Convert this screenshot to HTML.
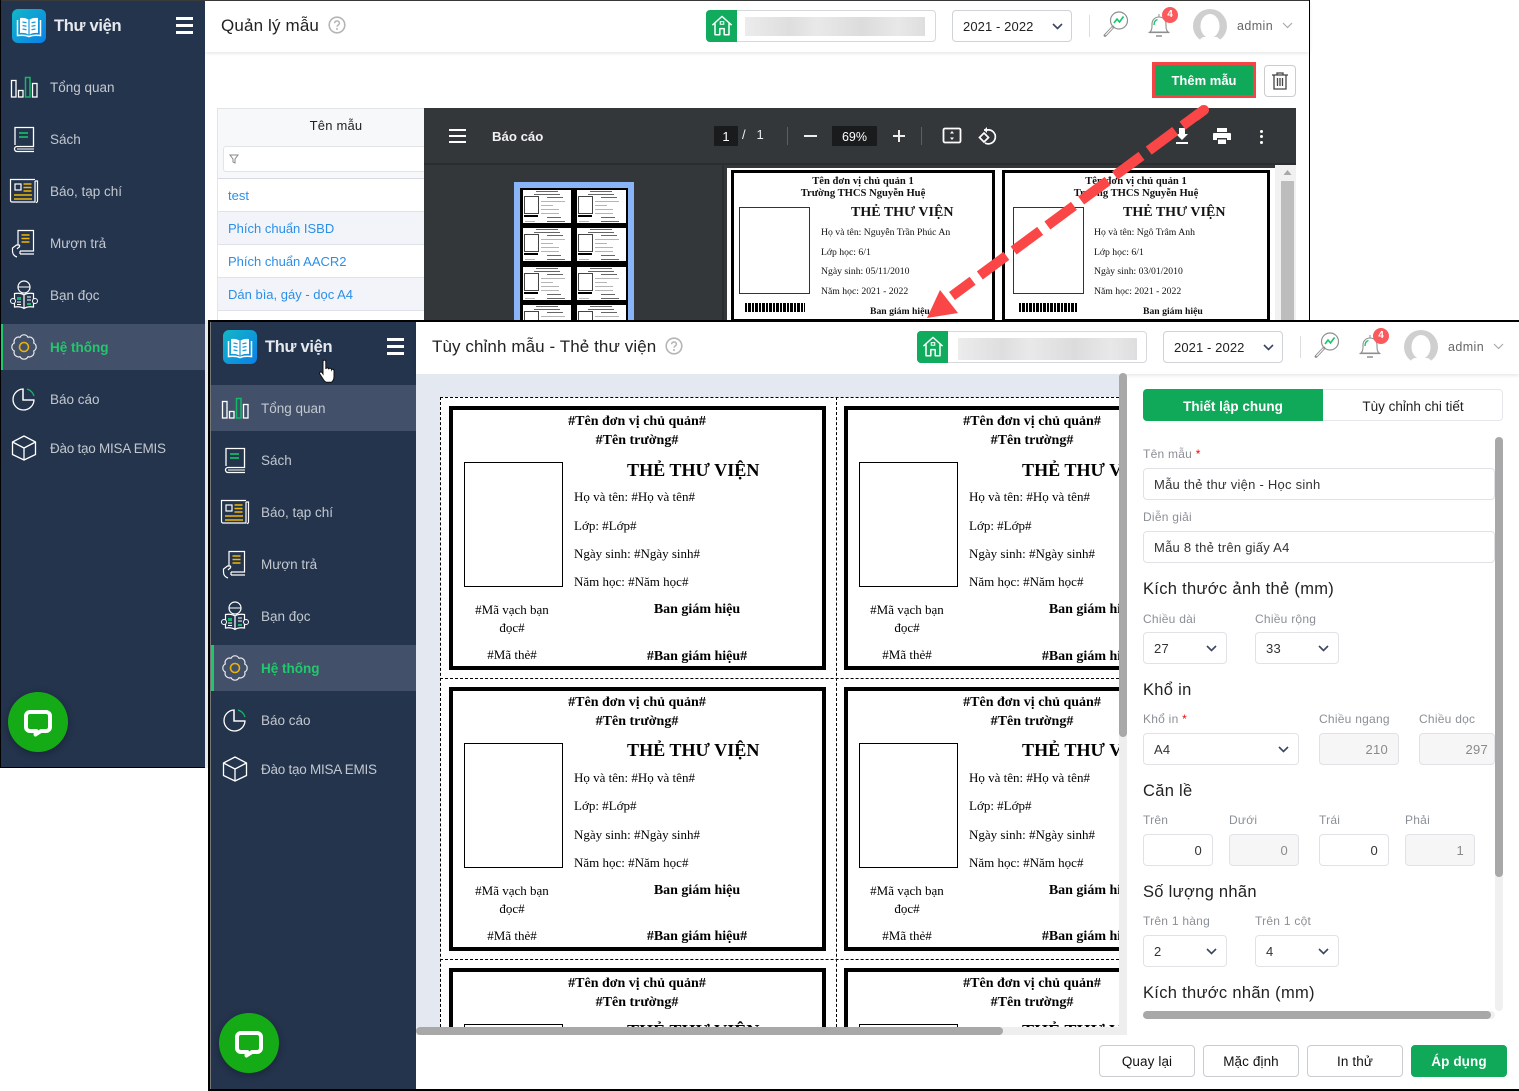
<!DOCTYPE html>
<html lang="vi"><head><meta charset="utf-8"><title>Thư viện</title>
<style>
html,body{margin:0;padding:0;background:#fff;overflow:hidden}
#p{position:relative;width:1519px;height:1091px;overflow:hidden;background:#fff;font-family:"Liberation Sans","Noto Sans CJK SC",sans-serif;color:#222}
#p div,#p svg{position:absolute;box-sizing:border-box}
.t{white-space:nowrap;line-height:24px;height:24px}
.side{width:205px;height:767px;background:#24344d;overflow:hidden}
.it{left:0;width:205px;height:46px}
.it svg{left:8px;top:7px;width:32px;height:32px}
.it .n{left:50px;top:0;line-height:48px;font-size:13.5px;color:#c3c8cf;white-space:nowrap}
.act{background:#42506a;border-left:3px solid #1fc96b}
.act svg{left:5px}.act .n{left:47px;color:#21c96c;font-weight:bold}
.hd{font-size:16.5px;color:#222;white-space:nowrap;line-height:26px;height:26px;letter-spacing:.3px}
.l{font-size:12px;color:#8b8f96;white-space:nowrap;line-height:22px;height:22px;letter-spacing:.25px}
.f{border:1px solid #e0e2e6;border-radius:4px;background:#fff;font-size:13px;color:#333;line-height:32px;padding:0 10px;white-space:nowrap;overflow:hidden;letter-spacing:.25px}
.r{text-align:right}.dis{background:#f6f6f6;color:#8a8a8a}
.chev{width:11px;height:7px}
.b{border:1px solid #c9ccd1;border-radius:4px;background:#fff;font-size:13.5px;color:#111;text-align:center;line-height:32px;letter-spacing:.1px}
.link{font-size:13px;color:#2b8fe8;white-space:nowrap;line-height:24px;height:24px}
.card{width:377px;height:264px;background:#fff;box-shadow:inset 0 0 0 4px #000;font-family:"Liberation Serif","Noto Serif CJK SC",serif;color:#000}
.card .x{white-space:nowrap;line-height:20px;height:20px;font-size:13px}
.c{text-align:center}.bd{font-weight:bold}
.card .tt{font-size:14px;line-height:22px;height:22px}
.card .th{font-size:18.1px;left:178px}
.m{width:270px;height:160px;background:#fff;font-family:"Liberation Serif","Noto Serif CJK SC",serif;color:#111;box-shadow:inset 0 0 0 3px #000}
.m .x{white-space:nowrap;line-height:20px;height:20px;font-size:9.7px}
.m .tt{font-size:10.6px}
.mini{background:#fff;box-shadow:inset 0 0 0 2px #000;overflow:hidden}
.mini .ph{left:3px;top:8px;width:15px;height:18px;border:1.5px solid #444}
.mini .bc{left:3px;top:27px;width:14px;height:2px;background:#000}
.mini .ln{height:1px;background:#b5b5b5}
.mini .dk{height:1px;background:#666}
</style></head><body><div id="p">
<svg width="0" height="0" style="left:0;top:0"><defs>
<symbol id="i1" viewBox="0 0 32 32"><g fill="none" stroke="#fff" stroke-width="1.3"><rect x="3.5" y="9.5" width="4.5" height="16.5"/><rect x="10.5" y="19.5" width="4.5" height="6.5"/><rect x="24.5" y="12.5" width="4.5" height="13.5"/></g><rect x="17.5" y="6.5" width="4.5" height="19.5" fill="none" stroke="#14b866" stroke-width="1.5"/></symbol>
<symbol id="i2" viewBox="0 0 32 32"><path d="M7 22V4.500h18.500v19H9a2.500 2.500 0 0 0 0 5h17" fill="none" stroke="#fff" stroke-width="1.300"/><path d="M9 26h17" stroke="#fff"/><path d="M11 10h9M11 14h9" stroke="#14b866" stroke-width="1.800"/></symbol>
<symbol id="i3" viewBox="0 0 32 32"><path d="M27 6v21H4a1.500 1.500 0 0 1-1.500-1.500V4.500h24.500M27 6h2.500v20a1.500 1.500 0 0 1-1.500 1.500" fill="none" stroke="#fff" stroke-width="1.200"/><rect x="7" y="9" width="6" height="6" fill="none" stroke="#fff" stroke-width="1.200"/><path d="M15.500 9h8M15.500 12.500h8M15.500 16h8M6 20h18M6 24h18" stroke="#f2b705" stroke-width="1.500"/></symbol>
<symbol id="i4" viewBox="0 0 32 32"><path d="M10 18V3.500h15.500V24H12M12 27h14M12 24v3" fill="none" stroke="#fff" stroke-width="1.200"/><path d="M13.500 8h8M13.500 11.500h8M13.500 15h8" stroke="#f2b705" stroke-width="1.500"/><path d="M9 30c-3-1-4.500-3-4.500-6v-3l4-3h2.500c1 0 1 2-.5 2.500L9 22" fill="#24344d" stroke="#fff" stroke-width="1.200"/></symbol>
<symbol id="i5" viewBox="0 0 32 32"><circle cx="16" cy="8" r="6" fill="none" stroke="#fff" stroke-width="1.200"/><path d="M10 8h12" stroke="#fff"/><path d="M16 16c-3-2-6-2-9.500-1.500V28c3.500-.5 6.500-.5 9.500 1.500 3-2 6-2 9.500-1.500V14.500C22 14 19 14 16 16zM16 16v13.500" fill="#24344d" stroke="#fff" stroke-width="1.200"/><path d="M9 18h4v3H9zM19 24h4v2h-4z" fill="#14b866"/><path d="M9 23h4M9 25.500h4M19 18h4M19 21h4" stroke="#fff"/><circle cx="5" cy="22" r="2.500" fill="#24344d" stroke="#fff"/><circle cx="27" cy="22" r="2.500" fill="#24344d" stroke="#fff"/></symbol>
<symbol id="i6" viewBox="0 0 32 32"><path d="M25.700 11.980A4.500 4.500 0 0 1 25.700 20.020A4.500 4.500 0 0 1 20.020 25.700A4.500 4.500 0 0 1 11.980 25.700A4.500 4.500 0 0 1 6.300 20.020A4.500 4.500 0 0 1 6.300 11.980A4.500 4.500 0 0 1 11.980 6.300A4.500 4.500 0 0 1 20.020 6.300A4.500 4.500 0 0 1 25.700 11.980Z" fill="none" stroke="#e8e8e8" stroke-width="1.200"/><circle cx="16" cy="16" r="4.500" fill="none" stroke="#e9b20c" stroke-width="1.600"/></symbol>
<symbol id="i7" viewBox="0 0 32 32"><path d="M15 6a10.500 10.500 0 1 0 11 11H15z" fill="none" stroke="#fff" stroke-width="1.300"/><path d="M15 5.500V17h11" fill="none" stroke="#fff" stroke-width="1.300"/><path d="M19 6a10.500 10.500 0 0 1 7 7" fill="none" stroke="#14b866" stroke-width="1.300"/></symbol>
<symbol id="i8" viewBox="0 0 32 32"><path d="M16 4l11.500 6v12.500L16 28 4.500 22.500V10zM4.500 10L16 16l11.500-6M16 16v12" fill="none" stroke="#fff" stroke-width="1.300" stroke-linejoin="round"/></symbol>
<symbol id="logo" viewBox="0 0 34 34"><path d="M17 11c-2.500-2-5.500-2.500-9-2v15c3.500-.5 6.500 0 9 2 2.500-2 5.500-2.500 9-2V9c-3.500-.5-6.500 0-9 2z" fill="#fff"/><path d="M17 11v15" stroke="#1a9ad8" stroke-width="1.200"/><path d="M5.500 11v15.500c4-.5 8-.5 11.500 1 3.500-1.500 7.500-1.500 11.500-1V11" fill="none" stroke="#fff" stroke-width="1.500"/><path d="M10.500 13l4 .8M10.500 16.500l4 .8M10.500 20l4 .8M23.500 13l-4 .8M23.500 16.500l-4 .8M23.500 20l-4 .8" stroke="#1a9ad8" stroke-width="1.300"/></symbol>
<symbol id="chat" viewBox="0 0 60 60"><path d="M22 20h16a4 4 0 0 1 4 4v11a4 4 0 0 1-4 4h-5l-5.500 3.500.7-3.500H22a4 4 0 0 1-4-4V24a4 4 0 0 1 4-4z" fill="none" stroke="#fff" stroke-width="4" stroke-linejoin="round"/></symbol>
<symbol id="home" viewBox="0 0 32 32"><path d="M5 15L16 5l11 10M8 13v13h5.500v-7h5v7H24V13" fill="none" stroke="#fff" stroke-width="1.700" stroke-linejoin="round"/><rect x="14" y="11" width="4" height="3" fill="none" stroke="#fff" stroke-width="1.200"/></symbol>
<symbol id="chv" viewBox="0 0 11 7"><path d="M1 1l4.500 4.500L10 1" fill="none" stroke="#3c4560" stroke-width="1.600"/></symbol>
<symbol id="srch" viewBox="0 0 28 28"><circle cx="17" cy="10.500" r="8.500" fill="#fff" stroke="#8f8f8f" stroke-width="1.200"/><path d="M11 17L3 25.500" stroke="#8f8f8f" stroke-width="2.800" stroke-linecap="round"/><path d="M3.500 25L10.500 17.500" stroke="#fff" stroke-width="1"/><path d="M12 13l3-4 2.500 3 4-5.500" fill="none" stroke="#14c56a" stroke-width="1.600"/></symbol>
<symbol id="bell" viewBox="0 0 28 28"><path d="M5 21c2-2 2-4 2-8 0-4 3-7 7-7s7 3 7 7c0 4 0 6 2 8z" fill="#fff" stroke="#8f8f8f" stroke-width="1.100"/><path d="M3.500 21.500h21" stroke="#8f8f8f" stroke-width="1.200"/><path d="M11 25h6" stroke="#8f8f8f" stroke-width="1.500"/><path d="M14 3v3" stroke="#8f8f8f"/><path d="M9 14c0-3 1.500-5 3.500-5.500" fill="none" stroke="#14c56a" stroke-width="1.400"/></symbol>
<symbol id="ava" viewBox="0 0 34 34"><circle cx="17" cy="17" r="17" fill="#cfcfcf"/><ellipse cx="17" cy="17" rx="9.500" ry="12" fill="#fff"/><path d="M5 34c2-5 5-6 6-6h12c1 0 4 1 6 6z" fill="#fff"/></symbol>
<symbol id="q" viewBox="0 0 18 18"><circle cx="9" cy="9" r="7.800" fill="none" stroke="#b5b5b5" stroke-width="1.600"/><path d="M6.600 7.200c0-3 4.800-3 4.800 0 0 1.800-2.400 1.800-2.400 3.600" fill="none" stroke="#b5b5b5" stroke-width="1.500"/><circle cx="9" cy="13" r="1" fill="#b5b5b5"/></symbol>
</defs></svg>

<!-- WINDOW 1 -->
<div style="left:0;top:0;width:1310px;height:1px;background:#3a3a3a"></div>
<div style="left:1309px;top:0;width:1px;height:322px;background:#000"></div>
<div style="left:205px;top:1px;width:1104px;height:51px;background:#fff;box-shadow:0 1px 4px rgba(0,0,0,.12)"></div>

<div class="side" style="left:1px;top:1px;width:204px;height:766px">
 <div style="left:-1px;top:-1px;width:205px;height:767px">
  <svg style="left:12px;top:9px;width:34px;height:34px;border-radius:6px;background:linear-gradient(135deg,#13b7c6,#0a80e8)"><use href="#logo"/></svg>
  <div style="left:54px;top:14px;font-size:16.5px;font-weight:bold;color:#e6e9ee;white-space:nowrap;line-height:24px;letter-spacing:-.3px">Thư viện</div>
  <div style="left:176px;top:17px;width:17px;height:3px;background:#fff"></div><div style="left:176px;top:24px;width:17px;height:3px;background:#fff"></div><div style="left:176px;top:31px;width:17px;height:3px;background:#fff"></div>
  <div class="it" style="top:64px"><svg><use href="#i1"/></svg><div class="n">Tổng quan</div></div>
  <div class="it" style="top:116px"><svg><use href="#i2"/></svg><div class="n">Sách</div></div>
  <div class="it" style="top:168px"><svg><use href="#i3"/></svg><div class="n">Báo, tạp chí</div></div>
  <div class="it" style="top:220px"><svg><use href="#i4"/></svg><div class="n">Mượn trả</div></div>
  <div class="it" style="top:272px"><svg><use href="#i5"/></svg><div class="n">Bạn đọc</div></div>
  <div class="it act" style="top:324px"><svg><use href="#i6"/></svg><div class="n">Hệ thống</div></div>
  <div class="it" style="top:376px"><svg><use href="#i7"/></svg><div class="n">Báo cáo</div></div>
  <div class="it" style="top:425px"><svg><use href="#i8"/></svg><div class="n" style="letter-spacing:-.25px">Đào tạo MISA EMIS</div></div>
  <svg style="left:8px;top:692px;width:60px;height:60px;border-radius:50%;background:#15ab17;box-shadow:0 2px 8px rgba(0,0,0,.3)"><use href="#chat"/></svg>
 </div>
</div>
<div style="left:0;top:0;width:1px;height:768px;background:#000"></div>
<div style="left:0;top:767px;width:209px;height:1px;background:#000"></div>
<div style="left:205px;top:320px;width:3px;height:448px;background:#e8e8e8"></div>

<div class="t" style="left:221px;top:14px;font-size:17px;color:#222;letter-spacing:.15px">Quản lý mẫu</div>
<svg style="left:328px;top:16px;width:18px;height:18px"><use href="#q"/></svg>
<div style="left:706px;top:10px;width:230px;height:32px;border:1px solid #d6d8dc;border-radius:4px;background:#fff"></div>
<div style="left:706px;top:10px;width:31px;height:32px;background:#10ab5d;border-radius:4px 0 0 4px"></div>
<svg style="left:708px;top:12px;width:28px;height:28px"><use href="#home"/></svg>
<div style="left:745px;top:17px;width:180px;height:19px;background:linear-gradient(90deg,#ececec,#dedede 25%,#e9e9e9 40%,#dcdcdc 65%,#e8e8e8 85%,#dedede)"></div>
<div class="f" style="left:952px;top:10px;width:120px;height:32px;border-color:#cfd2d6;color:#222;letter-spacing:.1px">2021 - 2022</div>
<svg class="chev" style="left:1052px;top:23px"><use href="#chv"/></svg>
<div style="left:1089px;top:15px;width:1px;height:22px;background:#ddd"></div>
<svg style="left:1102px;top:10px;width:28px;height:28px"><use href="#srch"/></svg>
<svg style="left:1145px;top:11px;width:28px;height:28px"><use href="#bell"/></svg>
<div style="left:1162px;top:7px;width:16px;height:16px;border-radius:50%;background:#fb5a5c;color:#fff;font-size:10px;font-weight:bold;text-align:center;line-height:16px">4</div>
<svg style="left:1193px;top:9px;width:34px;height:34px"><use href="#ava"/></svg>
<div class="t" style="left:1237px;top:14px;font-size:12.5px;color:#666;letter-spacing:.4px">admin</div>
<svg class="chev" style="left:1282px;top:22px"><path d="M1 1l4.500 4.500L10 1" fill="none" stroke="#aaa" stroke-width="1.200"/></svg>

<div style="left:1152px;top:62px;width:104px;height:36px;background:#10a95a;border:3px solid #f44446;color:#fff;font-weight:bold;font-size:13px;text-align:center;line-height:32px">Thêm mẫu</div>
<div style="left:1264px;top:65px;width:32px;height:32px;border:1px solid #ccc;border-radius:4px"></div>
<svg style="left:1270px;top:71px;width:20px;height:20px"><path d="M2 4h16M7 4V2h6v2M4 4v14h12V4M7.500 7v8M10 7v8M12.500 7v8" fill="none" stroke="#444" stroke-width="1.300"/></svg>

<!-- table -->
<div style="left:217px;top:108px;width:207px;height:212px;border-left:1px solid #e2e4e8;border-top:1px solid #e2e4e8;background:#fff"></div>
<div style="left:218px;top:109px;width:206px;height:69px;background:#f7f8fa"></div>
<div class="t" style="left:218px;top:114px;width:236px;text-align:center;font-size:13px;color:#222;letter-spacing:.2px">Tên mẫu</div>
<div style="left:223px;top:146px;width:201px;height:26px;background:#fff;border:1px solid #e2e4e8;border-radius:3px 0 0 3px;border-right:0"></div>
<svg style="left:229px;top:154px;width:10px;height:10px"><path d="M1 1h8L6 5v4L4 8V5z" fill="none" stroke="#888"/></svg>
<div style="left:218px;top:178px;width:206px;height:1px;background:#d7dae0"></div>
<div style="left:218px;top:211px;width:206px;height:34px;background:#f2f4f9;border-top:1px solid #dfe2ea;border-bottom:1px solid #dfe2ea"></div>
<div style="left:218px;top:277px;width:206px;height:34px;background:#f2f4f9;border-top:1px solid #dfe2ea;border-bottom:1px solid #dfe2ea"></div>
<div class="link" style="left:228px;top:184px">test</div>
<div class="link" style="left:228px;top:217px">Phích chuẩn ISBD</div>
<div class="link" style="left:228px;top:250px">Phích chuẩn AACR2</div>
<div class="link" style="left:228px;top:283px">Dán bìa, gáy - dọc A4</div>

<!-- pdf viewer -->
<div style="left:424px;top:108px;width:872px;height:214px;background:#33373a;overflow:hidden">
 <div style="left:0;top:55px;width:872px;height:2px;background:#2b2e31"></div>
 <div style="left:25px;top:21px;width:17px;height:2px;background:#fff"></div><div style="left:25px;top:27px;width:17px;height:2px;background:#fff"></div><div style="left:25px;top:33px;width:17px;height:2px;background:#fff"></div>
 <div class="t" style="left:68px;top:17px;font-size:13.2px;font-weight:bold;color:#f1f1f1">Báo cáo</div>
 <div style="left:290px;top:18px;width:24px;height:20px;background:#191b1c;color:#fff;font-size:13px;text-align:center;line-height:22px">1</div>
 <div class="t" style="left:318px;top:15px;font-size:13px;color:#eee">/&nbsp;&nbsp;&nbsp;1</div>
 <div style="left:363px;top:19px;width:1px;height:18px;background:#5c6064"></div>
 <div style="left:380px;top:27px;width:13px;height:2px;background:#eee"></div>
 <div style="left:408px;top:18px;width:45px;height:20px;background:#191b1c;color:#fff;font-size:12.5px;text-align:center;line-height:22px">69%</div>
 <div style="left:469px;top:27px;width:12px;height:2px;background:#eee"></div><div style="left:474px;top:22px;width:2px;height:12px;background:#eee"></div>
 <div style="left:497px;top:19px;width:1px;height:18px;background:#5c6064"></div>
 <svg style="left:518px;top:19px;width:20px;height:18px"><rect x="1.500" y="1.500" width="17" height="14" rx="1.500" fill="none" stroke="#fff" stroke-width="1.800"/><path d="M10 4l2 2.500H8zM10 13l2-2.500H8z" fill="#fff"/></svg>
 <svg style="left:553px;top:18px;width:20px;height:20px"><path d="M7 4h3a7 7 0 1 1-2 13" fill="none" stroke="#fff" stroke-width="1.700"/><path d="M10 1v6l-3-3z" fill="#fff"/><path d="M7 7l4.500 4.500L7 16l-4.500-4.500z" fill="none" stroke="#fff" stroke-width="1.700"/></svg>
 <svg style="left:750px;top:19px;width:16px;height:18px"><path d="M5 1h6v6h3l-6 6-6-6h3zM2 15h12v2H2z" fill="#fff"/></svg>
 <svg style="left:788px;top:19px;width:20px;height:18px"><path d="M5 1h10v4H5zM2 6h16a1 1 0 0 1 1 1v6h-4v-2H5v2H1V7a1 1 0 0 1 1-1zM6 12.500h8V17H6z" fill="#fff"/></svg>
 <div style="left:836px;top:22px;width:3px;height:3px;border-radius:50%;background:#fff"></div><div style="left:836px;top:27px;width:3px;height:3px;border-radius:50%;background:#fff"></div><div style="left:836px;top:33px;width:3px;height:3px;border-radius:50%;background:#fff"></div>
 <div style="left:298px;top:57px;width:2px;height:157px;background:#2b2e31"></div>
 <!-- thumb -->
 <div style="left:90px;top:74px;width:120px;height:140px;background:#8ab4f8;overflow:hidden">
  <div style="left:6px;top:6px;width:108px;height:134px;background:#000"></div>
  <div class="mini" style="left:7px;top:6px;width:52px;height:37px"><div class="dk" style="left:15px;top:3px;width:22px"></div><div class="dk" style="left:13px;top:6px;width:26px"></div><div class="ph"></div><div class="bc"></div><div class="dk" style="left:26px;top:9px;width:16px"></div><div class="ln" style="left:20px;top:13px;width:24px"></div><div class="ln" style="left:20px;top:17px;width:12px"></div><div class="ln" style="left:20px;top:21px;width:18px"></div><div class="ln" style="left:20px;top:25px;width:18px"></div><div class="dk" style="left:26px;top:29px;width:14px"></div><div class="ln" style="left:4px;top:33px;width:10px"></div><div class="dk" style="left:26px;top:33px;width:18px"></div></div>
  <div class="mini" style="left:61px;top:6px;width:53px;height:37px"><div class="dk" style="left:15px;top:3px;width:22px"></div><div class="dk" style="left:13px;top:6px;width:26px"></div><div class="ph"></div><div class="bc"></div><div class="dk" style="left:26px;top:9px;width:16px"></div><div class="ln" style="left:20px;top:13px;width:24px"></div><div class="ln" style="left:20px;top:17px;width:12px"></div><div class="ln" style="left:20px;top:21px;width:18px"></div><div class="ln" style="left:20px;top:25px;width:18px"></div><div class="dk" style="left:26px;top:29px;width:14px"></div><div class="ln" style="left:4px;top:33px;width:10px"></div><div class="dk" style="left:26px;top:33px;width:18px"></div></div>
  <div class="mini" style="left:7px;top:44px;width:52px;height:37px"><div class="dk" style="left:15px;top:3px;width:22px"></div><div class="dk" style="left:13px;top:6px;width:26px"></div><div class="ph"></div><div class="bc"></div><div class="dk" style="left:26px;top:9px;width:16px"></div><div class="ln" style="left:20px;top:13px;width:24px"></div><div class="ln" style="left:20px;top:17px;width:12px"></div><div class="ln" style="left:20px;top:21px;width:18px"></div><div class="ln" style="left:20px;top:25px;width:18px"></div><div class="dk" style="left:26px;top:29px;width:14px"></div><div class="ln" style="left:4px;top:33px;width:10px"></div><div class="dk" style="left:26px;top:33px;width:18px"></div></div>
  <div class="mini" style="left:61px;top:44px;width:53px;height:37px"><div class="dk" style="left:15px;top:3px;width:22px"></div><div class="dk" style="left:13px;top:6px;width:26px"></div><div class="ph"></div><div class="bc"></div><div class="dk" style="left:26px;top:9px;width:16px"></div><div class="ln" style="left:20px;top:13px;width:24px"></div><div class="ln" style="left:20px;top:17px;width:12px"></div><div class="ln" style="left:20px;top:21px;width:18px"></div><div class="ln" style="left:20px;top:25px;width:18px"></div><div class="dk" style="left:26px;top:29px;width:14px"></div><div class="ln" style="left:4px;top:33px;width:10px"></div><div class="dk" style="left:26px;top:33px;width:18px"></div></div>
  <div class="mini" style="left:7px;top:83px;width:52px;height:37px"><div class="dk" style="left:15px;top:3px;width:22px"></div><div class="dk" style="left:13px;top:6px;width:26px"></div><div class="ph"></div><div class="bc"></div><div class="dk" style="left:26px;top:9px;width:16px"></div><div class="ln" style="left:20px;top:13px;width:24px"></div><div class="ln" style="left:20px;top:17px;width:12px"></div><div class="ln" style="left:20px;top:21px;width:18px"></div><div class="ln" style="left:20px;top:25px;width:18px"></div><div class="dk" style="left:26px;top:29px;width:14px"></div><div class="ln" style="left:4px;top:33px;width:10px"></div><div class="dk" style="left:26px;top:33px;width:18px"></div></div>
  <div class="mini" style="left:61px;top:83px;width:53px;height:37px"><div class="dk" style="left:15px;top:3px;width:22px"></div><div class="dk" style="left:13px;top:6px;width:26px"></div><div class="ph"></div><div class="bc"></div><div class="dk" style="left:26px;top:9px;width:16px"></div><div class="ln" style="left:20px;top:13px;width:24px"></div><div class="ln" style="left:20px;top:17px;width:12px"></div><div class="ln" style="left:20px;top:21px;width:18px"></div><div class="ln" style="left:20px;top:25px;width:18px"></div><div class="dk" style="left:26px;top:29px;width:14px"></div><div class="ln" style="left:4px;top:33px;width:10px"></div><div class="dk" style="left:26px;top:33px;width:18px"></div></div>
  <div class="mini" style="left:7px;top:121px;width:52px;height:37px"><div class="dk" style="left:15px;top:3px;width:22px"></div><div class="dk" style="left:13px;top:6px;width:26px"></div><div class="ph"></div><div class="dk" style="left:26px;top:9px;width:16px"></div><div class="ln" style="left:20px;top:13px;width:24px"></div></div>
  <div class="mini" style="left:61px;top:121px;width:53px;height:37px"><div class="dk" style="left:15px;top:3px;width:22px"></div><div class="dk" style="left:13px;top:6px;width:26px"></div><div class="ph"></div><div class="dk" style="left:26px;top:9px;width:16px"></div><div class="ln" style="left:20px;top:13px;width:24px"></div></div>
 </div>
 <!-- main page -->
 <div style="left:303px;top:60px;width:548px;height:154px;background:#fff"></div>
 <div style="left:851px;top:57px;width:21px;height:157px;background:#f1f1f1"></div>
 <div style="left:857px;top:73px;width:13px;height:141px;background:#bdbdbd"></div>
 <svg style="left:858px;top:61px;width:11px;height:8px"><path d="M5.500 1l4 5h-8z" fill="#a8a8a8"/></svg>
 <div class="m" style="left:307px;top:62px;width:264px;height:152px">
  <div class="x c bd tt" style="left:0;top:2px;width:264px">Tên đơn vị chủ quản 1</div>
  <div class="x c bd tt" style="left:0;top:14px;width:264px">Trường THCS Nguyễn Huệ</div>
  <div style="left:8px;top:37px;width:71px;height:87px;border:1px solid #333;background:#fff"></div>
  <div class="x bd" style="left:120px;top:33px;font-size:14px">THẺ THƯ VIỆN</div>
  <div class="x" style="left:90px;top:53px">Họ và tên: Nguyễn Trần Phúc An</div>
  <div class="x" style="left:90px;top:73px">Lớp học: 6/1</div>
  <div class="x" style="left:90px;top:92px">Ngày sinh: 05/11/2010</div>
  <div class="x" style="left:90px;top:112px">Năm học: 2021 - 2022</div>
  <div style="left:14px;top:133px;width:60px;height:9px;background:repeating-linear-gradient(90deg,#000 0 2px,#fff 2px 3px,#000 3px 6px,#fff 6px 7px)"></div>
  <div class="x bd" style="left:139px;top:132px">Ban giám hiệu</div>
 </div>
 <div class="m" style="left:578px;top:62px;width:268px;height:152px">
  <div class="x c bd tt" style="left:0;top:2px;width:268px">Tên đơn vị chủ quản 1</div>
  <div class="x c bd tt" style="left:0;top:14px;width:268px">Trường THCS Nguyễn Huệ</div>
  <div style="left:11px;top:37px;width:71px;height:87px;border:1px solid #333;background:#fff"></div>
  <div class="x bd" style="left:121px;top:33px;font-size:14px">THẺ THƯ VIỆN</div>
  <div class="x" style="left:92px;top:53px">Họ và tên: Ngô Trâm Anh</div>
  <div class="x" style="left:92px;top:73px">Lớp học: 6/1</div>
  <div class="x" style="left:92px;top:92px">Ngày sinh: 03/01/2010</div>
  <div class="x" style="left:92px;top:112px">Năm học: 2021 - 2022</div>
  <div style="left:17px;top:133px;width:59px;height:9px;background:repeating-linear-gradient(90deg,#000 0 2px,#fff 2px 3px,#000 3px 6px,#fff 6px 7px)"></div>
  <div class="x bd" style="left:141px;top:132px">Ban giám hiệu</div>
 </div>
</div>

<!-- ARROW -->
<svg style="left:900px;top:100px;width:320px;height:220px;z-index:5"><path d="M305 9L52 196" fill="none" stroke="#fb4647" stroke-width="10" stroke-dasharray="33 9" stroke-dashoffset="5"/><path d="M304 10L296 16" stroke="#fb4647" stroke-width="10" stroke-linecap="round"/><path d="M27 218L40 190 58 213z" fill="#fb4647"/></svg>

<!-- WINDOW 2 -->
<div style="left:208px;top:320px;width:1311px;height:771px;background:#000"></div>
<div style="left:210px;top:322px;width:1309px;height:767px;background:#fff"></div>
<div style="left:210px;top:322px;width:1px;height:767px;background:#777"></div>
<div class="side" style="left:211px;top:322px;height:767px">
 <div style="left:0;top:-1px;width:205px;height:768px">
  <svg style="left:12px;top:9px;width:34px;height:34px;border-radius:6px;background:linear-gradient(135deg,#13b7c6,#0a80e8)"><use href="#logo"/></svg>
  <div style="left:54px;top:14px;font-size:16.5px;font-weight:bold;color:#e6e9ee;white-space:nowrap;line-height:24px;letter-spacing:-.3px">Thư viện</div>
  <div style="left:176px;top:17px;width:17px;height:3px;background:#fff"></div><div style="left:176px;top:24px;width:17px;height:3px;background:#fff"></div><div style="left:176px;top:31px;width:17px;height:3px;background:#fff"></div>
  <div class="it" style="top:64px;background:#42506a"><svg><use href="#i1"/></svg><div class="n">Tổng quan</div></div>
  <div class="it" style="top:116px"><svg><use href="#i2"/></svg><div class="n">Sách</div></div>
  <div class="it" style="top:168px"><svg><use href="#i3"/></svg><div class="n">Báo, tạp chí</div></div>
  <div class="it" style="top:220px"><svg><use href="#i4"/></svg><div class="n">Mượn trả</div></div>
  <div class="it" style="top:272px"><svg><use href="#i5"/></svg><div class="n">Bạn đọc</div></div>
  <div class="it act" style="top:324px"><svg><use href="#i6"/></svg><div class="n">Hệ thống</div></div>
  <div class="it" style="top:376px"><svg><use href="#i7"/></svg><div class="n">Báo cáo</div></div>
  <div class="it" style="top:425px"><svg><use href="#i8"/></svg><div class="n" style="letter-spacing:-.25px">Đào tạo MISA EMIS</div></div>
  <svg style="left:8px;top:692px;width:60px;height:60px;border-radius:50%;background:#15ab17;box-shadow:0 2px 8px rgba(0,0,0,.3)"><use href="#chat"/></svg>
 </div>
</div>
<svg style="left:318px;top:359px;width:20px;height:26px;z-index:6"><path d="M5 2.500c0-1.800 2.800-1.800 2.800 0V10c.3-1.500 2.800-1.500 2.900.3.300-1.500 2.700-1.300 2.800.5.500-1 2.500-.8 2.500 1v6c0 3-1.500 5-3 5.500H9c-1.500 0-2.500-1-3.500-2.500L1.800 15c-.9-1.500 1-2.800 2.200-1.500L5 15z" fill="#fff" stroke="#111" stroke-width="1"/></svg>

<!-- header 2 -->
<div style="left:416px;top:322px;width:1103px;height:52px;background:#fff;box-shadow:0 1px 4px rgba(0,0,0,.12)"></div>
<div class="t" style="left:432px;top:335px;font-size:17px;color:#222;letter-spacing:.09px">Tùy chỉnh mẫu - Thẻ thư viện</div>
<svg style="left:665px;top:337px;width:18px;height:18px"><use href="#q"/></svg>
<div style="left:917px;top:331px;width:230px;height:32px;border:1px solid #d6d8dc;border-radius:4px;background:#fff"></div>
<div style="left:917px;top:331px;width:31px;height:32px;background:#10ab5d;border-radius:4px 0 0 4px"></div>
<svg style="left:919px;top:333px;width:28px;height:28px"><use href="#home"/></svg>
<div style="left:958px;top:338px;width:179px;height:22px;background:linear-gradient(90deg,#ececec,#dedede 25%,#e9e9e9 40%,#dcdcdc 65%,#e8e8e8 85%,#dedede)"></div>
<div class="f" style="left:1163px;top:331px;width:120px;height:32px;border-color:#cfd2d6;color:#222;letter-spacing:.1px">2021 - 2022</div>
<svg class="chev" style="left:1263px;top:344px"><use href="#chv"/></svg>
<div style="left:1300px;top:336px;width:1px;height:22px;background:#ddd"></div>
<svg style="left:1313px;top:331px;width:28px;height:28px"><use href="#srch"/></svg>
<svg style="left:1356px;top:332px;width:28px;height:28px"><use href="#bell"/></svg>
<div style="left:1373px;top:328px;width:16px;height:16px;border-radius:50%;background:#fb5a5c;color:#fff;font-size:10px;font-weight:bold;text-align:center;line-height:16px">4</div>
<svg style="left:1404px;top:330px;width:34px;height:34px"><use href="#ava"/></svg>
<div class="t" style="left:1448px;top:335px;font-size:12.5px;color:#666;letter-spacing:.4px">admin</div>
<svg class="chev" style="left:1493px;top:343px"><path d="M1 1l4.500 4.500L10 1" fill="none" stroke="#aaa" stroke-width="1.200"/></svg>

<!-- content -->
<div style="left:416px;top:374px;width:703px;height:653px;background:#e4e8f1;overflow:hidden">
 <div style="left:24px;top:23px;width:679px;height:630px;background:#fff"></div>
 <div style="left:24px;top:23px;width:679px;height:0;border-top:1px dashed #000"></div>
 <div style="left:24px;top:304px;width:679px;height:0;border-top:1px dashed #000"></div>
 <div style="left:24px;top:585px;width:679px;height:0;border-top:1px dashed #000"></div>
 <div style="left:24px;top:23px;width:0;height:630px;border-left:1px dashed #000"></div>
 <div style="left:420px;top:23px;width:0;height:630px;border-left:1px dashed #000"></div>

 <div class="card" style="left:33px;top:32px"><div class="x c bd tt" style="left:0;top:5px;width:376px">#Tên đơn vị chủ quản#</div><div class="x c bd tt" style="left:0;top:24px;width:376px">#Tên trường#</div><div style="left:15px;top:56px;width:99px;height:125px;border:1px solid #000"></div><div class="x bd th" style="top:54px">THẺ THƯ VIỆN</div><div class="x" style="left:125px;top:81px">Họ và tên: #Họ và tên#</div><div class="x" style="left:125px;top:110px">Lớp: #Lớp#</div><div class="x" style="left:125px;top:138px">Ngày sinh: #Ngày sinh#</div><div class="x" style="left:125px;top:166px">Năm học: #Năm học#</div><div class="x c" style="left:0;top:194px;width:126px">#Mã vạch bạn</div><div class="x c" style="left:0;top:212px;width:126px">đọc#</div><div class="x c" style="left:0;top:239px;width:126px">#Mã thẻ#</div><div class="x c bd tt" style="left:120px;top:193px;width:256px">Ban giám hiệu</div><div class="x c bd tt" style="left:120px;top:240px;width:256px">#Ban giám hiệu#</div></div>
 <div class="card" style="left:428px;top:32px"><div class="x c bd tt" style="left:0;top:5px;width:376px">#Tên đơn vị chủ quản#</div><div class="x c bd tt" style="left:0;top:24px;width:376px">#Tên trường#</div><div style="left:15px;top:56px;width:99px;height:125px;border:1px solid #000"></div><div class="x bd th" style="top:54px">THẺ THƯ VIỆN</div><div class="x" style="left:125px;top:81px">Họ và tên: #Họ và tên#</div><div class="x" style="left:125px;top:110px">Lớp: #Lớp#</div><div class="x" style="left:125px;top:138px">Ngày sinh: #Ngày sinh#</div><div class="x" style="left:125px;top:166px">Năm học: #Năm học#</div><div class="x c" style="left:0;top:194px;width:126px">#Mã vạch bạn</div><div class="x c" style="left:0;top:212px;width:126px">đọc#</div><div class="x c" style="left:0;top:239px;width:126px">#Mã thẻ#</div><div class="x c bd tt" style="left:120px;top:193px;width:256px">Ban giám hiệu</div><div class="x c bd tt" style="left:120px;top:240px;width:256px">#Ban giám hiệu#</div></div>
 <div class="card" style="left:33px;top:313px"><div class="x c bd tt" style="left:0;top:5px;width:376px">#Tên đơn vị chủ quản#</div><div class="x c bd tt" style="left:0;top:24px;width:376px">#Tên trường#</div><div style="left:15px;top:56px;width:99px;height:125px;border:1px solid #000"></div><div class="x bd th" style="top:53px">THẺ THƯ VIỆN</div><div class="x" style="left:125px;top:81px">Họ và tên: #Họ và tên#</div><div class="x" style="left:125px;top:109px">Lớp: #Lớp#</div><div class="x" style="left:125px;top:138px">Ngày sinh: #Ngày sinh#</div><div class="x" style="left:125px;top:166px">Năm học: #Năm học#</div><div class="x c" style="left:0;top:194px;width:126px">#Mã vạch bạn</div><div class="x c" style="left:0;top:212px;width:126px">đọc#</div><div class="x c" style="left:0;top:239px;width:126px">#Mã thẻ#</div><div class="x c bd tt" style="left:120px;top:193px;width:256px">Ban giám hiệu</div><div class="x c bd tt" style="left:120px;top:239px;width:256px">#Ban giám hiệu#</div></div>
 <div class="card" style="left:428px;top:313px"><div class="x c bd tt" style="left:0;top:5px;width:376px">#Tên đơn vị chủ quản#</div><div class="x c bd tt" style="left:0;top:24px;width:376px">#Tên trường#</div><div style="left:15px;top:56px;width:99px;height:125px;border:1px solid #000"></div><div class="x bd th" style="top:53px">THẺ THƯ VIỆN</div><div class="x" style="left:125px;top:81px">Họ và tên: #Họ và tên#</div><div class="x" style="left:125px;top:109px">Lớp: #Lớp#</div><div class="x" style="left:125px;top:138px">Ngày sinh: #Ngày sinh#</div><div class="x" style="left:125px;top:166px">Năm học: #Năm học#</div><div class="x c" style="left:0;top:194px;width:126px">#Mã vạch bạn</div><div class="x c" style="left:0;top:212px;width:126px">đọc#</div><div class="x c" style="left:0;top:239px;width:126px">#Mã thẻ#</div><div class="x c bd tt" style="left:120px;top:193px;width:256px">Ban giám hiệu</div><div class="x c bd tt" style="left:120px;top:239px;width:256px">#Ban giám hiệu#</div></div>
 <div class="card" style="left:33px;top:594px;height:70px;overflow:hidden"><div class="x c bd tt" style="left:0;top:5px;width:376px">#Tên đơn vị chủ quản#</div><div class="x c bd tt" style="left:0;top:24px;width:376px">#Tên trường#</div><div style="left:15px;top:56px;width:99px;height:60px;border:1px solid #000"></div><div class="x bd th" style="top:53px">THẺ THƯ VIỆN</div></div>
 <div class="card" style="left:428px;top:594px;height:70px;overflow:hidden"><div class="x c bd tt" style="left:0;top:5px;width:376px">#Tên đơn vị chủ quản#</div><div class="x c bd tt" style="left:0;top:24px;width:376px">#Tên trường#</div><div style="left:15px;top:56px;width:99px;height:60px;border:1px solid #000"></div><div class="x bd th" style="top:53px">THẺ THƯ VIỆN</div></div>
</div>
<!-- content scrollbars -->
<div style="left:1119px;top:374px;width:8px;height:661px;background:#eee"></div>
<div style="left:1119px;top:373px;width:8px;height:364px;background:#a8a8a8;border-radius:4px"></div>
<div style="left:416px;top:1027px;width:703px;height:8px;background:#eee"></div>
<div style="left:416px;top:1027px;width:587px;height:8px;background:#a8a8a8;border-radius:4px"></div>

<!-- right panel -->
<div style="left:1143px;top:389px;width:360px;height:32px;border:1px solid #e6e7ea;border-radius:4px;background:#fff"></div>
<div style="left:1143px;top:389px;width:180px;height:32px;background:#10a95a;border-radius:4px 0 0 4px;color:#fff;font-weight:bold;font-size:13.5px;text-align:center;line-height:35px">Thiết lập chung</div>
<div style="left:1323px;top:389px;width:180px;height:32px;color:#222;font-size:13.5px;text-align:center;line-height:36px">Tùy chỉnh chi tiết</div>

<div class="l" style="left:1143px;top:443px">Tên mẫu <span style="color:#f00">*</span></div>
<div class="f" style="left:1143px;top:468px;width:352px;height:32px">Mẫu thẻ thư viện - Học sinh</div>
<div class="l" style="left:1143px;top:506px">Diễn giải</div>
<div class="f" style="left:1143px;top:531px;width:352px;height:32px">Mẫu 8 thẻ trên giấy A4</div>
<div class="hd" style="left:1143px;top:576px">Kích thước ảnh thẻ (mm)</div>
<div class="l" style="left:1143px;top:608px">Chiều dài</div>
<div class="l" style="left:1255px;top:608px">Chiều rộng</div>
<div class="f" style="left:1143px;top:632px;width:84px;height:32px">27</div><svg class="chev" style="left:1206px;top:645px"><use href="#chv"/></svg>
<div class="f" style="left:1255px;top:632px;width:84px;height:32px">33</div><svg class="chev" style="left:1318px;top:645px"><use href="#chv"/></svg>
<div class="hd" style="left:1143px;top:677px">Khổ in</div>
<div class="l" style="left:1143px;top:708px">Khổ in <span style="color:#f00">*</span></div>
<div class="l" style="left:1319px;top:708px">Chiều ngang</div>
<div class="l" style="left:1419px;top:708px">Chiều dọc</div>
<div class="f" style="left:1143px;top:733px;width:156px;height:32px">A4</div><svg class="chev" style="left:1278px;top:746px"><use href="#chv"/></svg>
<div class="f r dis" style="left:1319px;top:733px;width:80px;height:32px">210</div>
<div class="f r dis" style="left:1419px;top:733px;width:76px;height:32px;padding-right:6px">297</div>
<div class="hd" style="left:1143px;top:778px">Căn lề</div>
<div class="l" style="left:1143px;top:809px">Trên</div><div class="l" style="left:1229px;top:809px">Dưới</div><div class="l" style="left:1319px;top:809px">Trái</div><div class="l" style="left:1405px;top:809px">Phải</div>
<div class="f r" style="left:1143px;top:834px;width:70px;height:32px">0</div>
<div class="f r dis" style="left:1229px;top:834px;width:70px;height:32px">0</div>
<div class="f r" style="left:1319px;top:834px;width:70px;height:32px">0</div>
<div class="f r dis" style="left:1405px;top:834px;width:70px;height:32px">1</div>
<div class="hd" style="left:1143px;top:879px">Số lượng nhãn</div>
<div class="l" style="left:1143px;top:910px">Trên 1 hàng</div><div class="l" style="left:1255px;top:910px">Trên 1 cột</div>
<div class="f" style="left:1143px;top:935px;width:84px;height:32px">2</div><svg class="chev" style="left:1206px;top:948px"><use href="#chv"/></svg>
<div class="f" style="left:1255px;top:935px;width:84px;height:32px">4</div><svg class="chev" style="left:1318px;top:948px"><use href="#chv"/></svg>
<div class="hd" style="left:1143px;top:980px">Kích thước nhãn (mm)</div>
<!-- panel scrollbars -->
<div style="left:1495px;top:437px;width:8px;height:574px;background:#f0f0f0;border-radius:4px"></div>
<div style="left:1495px;top:437px;width:8px;height:440px;background:#a8a8a8;border-radius:4px"></div>
<div style="left:1143px;top:1011px;width:352px;height:8px;background:#f0f0f0;border-radius:4px"></div>
<div style="left:1143px;top:1011px;width:348px;height:8px;background:#a8a8a8;border-radius:4px"></div>
<!-- footer -->
<div class="b" style="left:1099px;top:1045px;width:96px;height:32px">Quay lại</div>
<div class="b" style="left:1203px;top:1045px;width:96px;height:32px">Mặc định</div>
<div class="b" style="left:1307px;top:1045px;width:96px;height:32px">In thử</div>
<div class="b" style="left:1411px;top:1045px;width:96px;height:32px;background:#10a95a;border-color:#10a95a;color:#fff;font-weight:bold">Áp dụng</div>
</div></body></html>
